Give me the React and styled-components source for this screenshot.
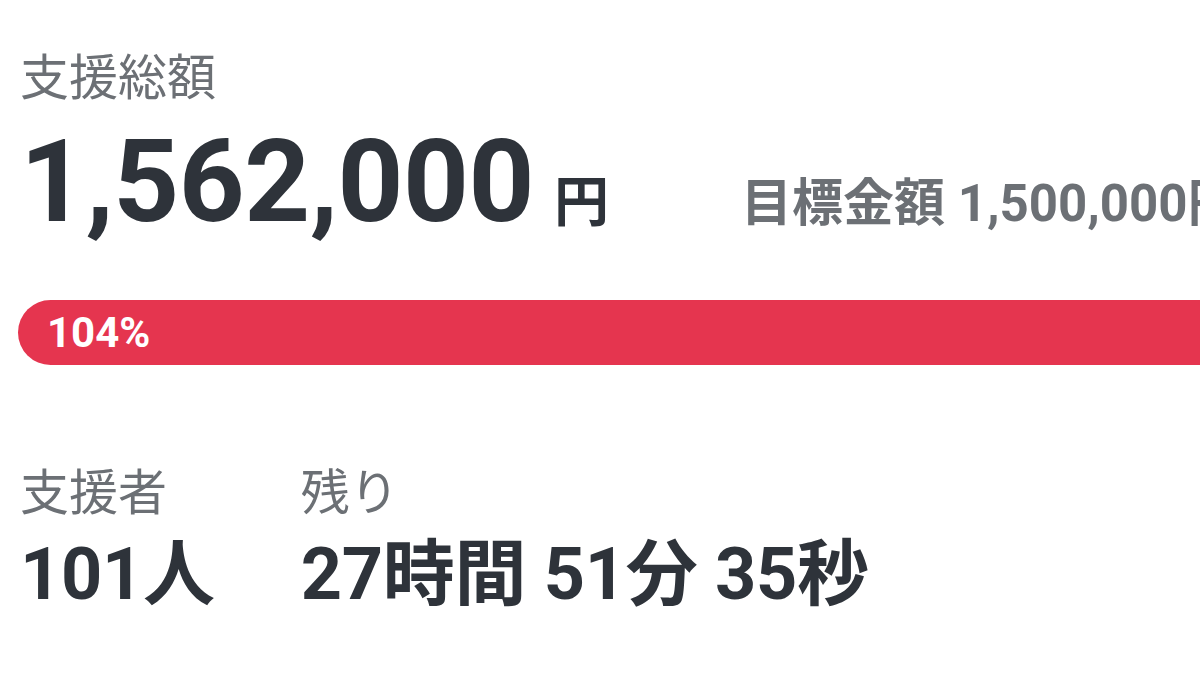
import React from 'react';
import styled, { createGlobalStyle } from 'styled-components';

const GlobalStyle = createGlobalStyle`
  html, body {
    margin: 0;
    padding: 0;
    background: #ffffff;
    overflow: hidden;
  }
  body {
    font-family: Roboto, "Noto Sans CJK JP", sans-serif;
  }
`;

const Wrapper = styled.section`
  width: 1500px;
  padding: 44px 0 0 20px;
  box-sizing: border-box;
`;

const Label = styled.div`
  font-family: Roboto, "Noto Sans CJK JP", sans-serif;
  font-size: 49px;
  line-height: 70px;
  color: #6c7075;
  font-weight: 400;
  white-space: nowrap;
`;

const AmountRow = styled.div`
  display: flex;
  align-items: baseline;
  margin-top: 8px;
  white-space: nowrap;
`;

const Amount = styled.span`
  font-size: 115px;
  line-height: 120px;
  font-weight: 700;
  color: #2e333a;
  letter-spacing: -0.5px;
`;

const Yen = styled.span`
  font-size: 55px;
  font-weight: 700;
  color: #2e333a;
  margin-left: 20px;
`;

const Target = styled.span`
  margin-left: 132px;
  font-size: 51px;
  font-weight: 700;
  color: #6c7075;
`;

const Bar = styled.div`
  margin: 58px 0 0 -2px;
  height: 65px;
  width: 1400px;
  border-radius: 33px;
  background: #e5354f;
  display: flex;
  align-items: center;
  padding-left: 29px;
  box-sizing: border-box;
`;

const Percent = styled.span`
  color: #ffffff;
  font-size: 42px;
  font-weight: 700;
`;

const Stats = styled.div`
  display: flex;
  gap: 86px;
  margin-top: 94px;
`;

const Stat = styled.div`
  display: flex;
  flex-direction: column;
`;

const Value = styled.div`
  margin-top: 4px;
  font-size: 72px;
  line-height: 84px;
  font-weight: 700;
  color: #2e333a;
  white-space: nowrap;
  letter-spacing: -0.3px;
`;

const App = () => {
  return (
    <>
      <GlobalStyle />
      <Wrapper>
        <Label>支援総額</Label>
        <AmountRow>
          <Amount>1,562,000</Amount>
          <Yen>円</Yen>
          <Target>目標金額 1,500,000円</Target>
        </AmountRow>
        <Bar>
          <Percent>104%</Percent>
        </Bar>
        <Stats>
          <Stat>
            <Label>支援者</Label>
            <Value>101人</Value>
          </Stat>
          <Stat>
            <Label>残り</Label>
            <Value>27時間 51分 35秒</Value>
          </Stat>
        </Stats>
      </Wrapper>
    </>
  );
};

export default App;
